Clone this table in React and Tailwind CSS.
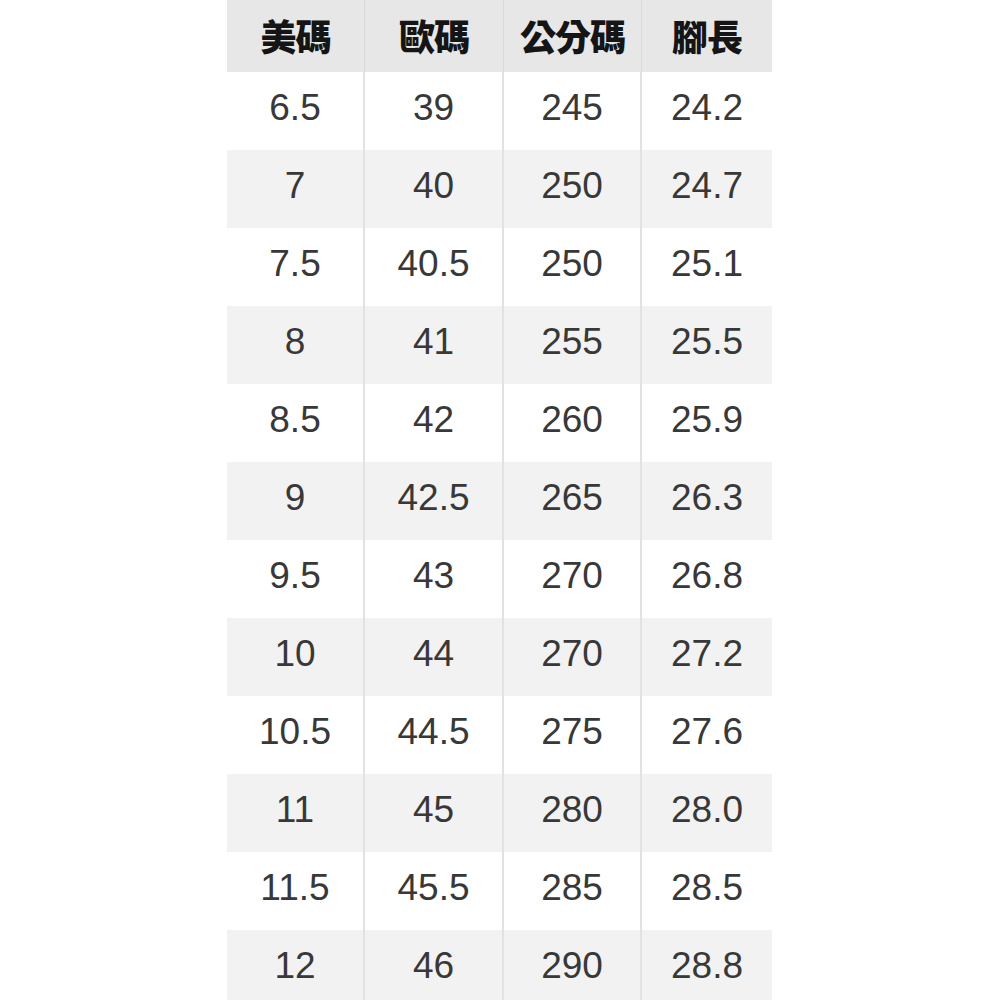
const headers = ["美碼", "歐碼", "公分碼", "腳長"];

const rows = [
  ["6.5", "39", "245", "24.2"],
  ["7", "40", "250", "24.7"],
  ["7.5", "40.5", "250", "25.1"],
  ["8", "41", "255", "25.5"],
  ["8.5", "42", "260", "25.9"],
  ["9", "42.5", "265", "26.3"],
  ["9.5", "43", "270", "26.8"],
  ["10", "44", "270", "27.2"],
  ["10.5", "44.5", "275", "27.6"],
  ["11", "45", "280", "28.0"],
  ["11.5", "45.5", "285", "28.5"],
  ["12", "46", "290", "28.8"],
];

const cols = "grid grid-cols-[138px_139px_138px_130px]";

const App = () => {
  return (
    <div className="w-full h-[1000px] overflow-hidden bg-white">
      <div className="ml-[227px] w-[545px]">
        <div className={`${cols} h-[72px] bg-[#e7e7e7]`}>
          {headers.map((h, i) => (
            <div
              key={h}
              className={`flex items-center justify-center pb-[2px] text-[36px] font-black text-[#151515] tracking-[-1px] [font-family:'Noto_Sans_CJK_TC',sans-serif] ${
                i < 3 ? "border-r border-[#d9d9d9]" : ""
              }`}
            >
              {h}
            </div>
          ))}
        </div>
        {rows.map((r, ri) => (
          <div
            key={ri}
            className={`${cols} h-[78px] ${ri % 2 === 1 ? "bg-[#f2f2f2]" : "bg-white"}`}
          >
            {r.map((c, ci) => (
              <div
                key={ci}
                className={`flex items-center justify-center pb-[6px] text-[37px] text-[#383838] [font-family:'Liberation_Sans',Arial,sans-serif] ${
                  ci < 3 ? "border-r-2 border-[#e2e2e2]" : ""
                }`}
              >
                {c}
              </div>
            ))}
          </div>
        ))}
      </div>
    </div>
  );
};

export default App;
